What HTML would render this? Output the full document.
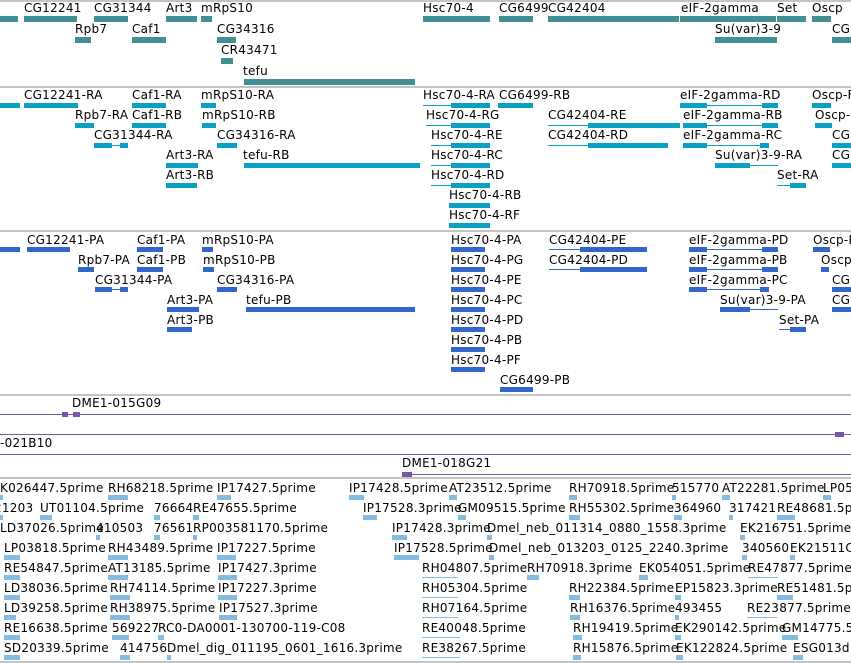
<!DOCTYPE html>
<html><head><meta charset="utf-8"><style>
*{margin:0;padding:0}
body{width:851px;height:663px;background:#fff;position:relative;overflow:hidden;font-family:"DejaVu Sans","Liberation Sans",sans-serif;font-size:12px;color:#000}
div{position:absolute}
.t{white-space:nowrap;line-height:14px;letter-spacing:0.25px}
.hl{left:0;width:851px;height:2px;background:#c4c4c4}
.g{background:#428f94;height:6px}
.x{background:#0aa0c3;height:5px}
.xl{background:#0aa0c3;height:1px}
.p{background:#3366cc;height:5px}
.pl{background:#3366cc;height:1px}
.e{background:#86bbe0;height:5px}
.u{background:#7755aa;height:1px}
.ua{background:#7755aa;height:5px}
</style></head><body>
<div class="hl" style="top:0"></div>
<!-- gene track -->
<div class="t" style="left:24px;top:1px">CG12241</div><div class="t" style="left:94px;top:1px">CG31344</div><div class="t" style="left:166px;top:1px">Art3</div><div class="t" style="left:201px;top:1px">mRpS10</div><div class="t" style="left:423px;top:1px">Hsc70-4</div><div class="t" style="left:499px;top:1px">CG6499</div><div class="t" style="left:548px;top:1px">CG42404</div><div class="t" style="left:681px;top:1px">eIF-2gamma</div><div class="t" style="left:777px;top:1px">Set</div><div class="t" style="left:812px;top:1px">Oscp</div>
<div class="g" style="left:0;top:16px;width:18px"></div><div class="g" style="left:24px;top:16px;width:53px"></div><div class="g" style="left:94px;top:16px;width:34px"></div><div class="g" style="left:166px;top:16px;width:31px"></div><div class="g" style="left:201px;top:16px;width:11px"></div><div class="g" style="left:423px;top:16px;width:67px"></div><div class="g" style="left:499px;top:16px;width:34px"></div><div class="g" style="left:548px;top:16px;width:131px"></div><div class="g" style="left:680px;top:16px;width:96px"></div><div class="g" style="left:777px;top:16px;width:29px"></div><div class="g" style="left:812px;top:16px;width:19px"></div>
<div class="t" style="left:75px;top:22px">Rpb7</div><div class="t" style="left:132px;top:22px">Caf1</div><div class="t" style="left:217px;top:22px">CG34316</div><div class="t" style="left:715px;top:22px">Su(var)3-9</div><div class="t" style="left:832px;top:22px">CG2</div>
<div class="g" style="left:75px;top:37px;width:16px"></div><div class="g" style="left:132px;top:37px;width:34px"></div><div class="g" style="left:217px;top:37px;width:19px"></div><div class="g" style="left:715px;top:37px;width:62px"></div><div class="g" style="left:832px;top:37px;width:19px"></div>
<div class="t" style="left:221px;top:43px">CR43471</div><div class="g" style="left:221px;top:58px;width:12px"></div>
<div class="t" style="left:243px;top:64px">tefu</div><div class="g" style="left:244px;top:79px;width:171px"></div>
<div class="hl" style="top:86px"></div>
<!-- transcripts -->
<div class="t" style="left:24px;top:88px">CG12241-RA</div><div class="t" style="left:132px;top:88px">Caf1-RA</div><div class="t" style="left:201px;top:88px">mRpS10-RA</div><div class="t" style="left:423px;top:88px">Hsc70-4-RA</div><div class="t" style="left:499px;top:88px">CG6499-RB</div><div class="t" style="left:680px;top:88px">eIF-2gamma-RD</div><div class="t" style="left:812px;top:88px">Oscp-F</div>
<div class="x" style="left:0;top:103px;width:20px"></div><div class="x" style="left:24px;top:103px;width:54px"></div><div class="x" style="left:132px;top:103px;width:34px"></div><div class="x" style="left:201px;top:103px;width:15px"></div><div class="xl" style="left:423px;top:105px;width:67px"></div><div class="x" style="left:451px;top:103px;width:39px"></div><div class="x" style="left:498px;top:103px;width:35px"></div><div class="x" style="left:680px;top:103px;width:27px"></div><div class="xl" style="left:680px;top:105px;width:98px"></div><div class="x" style="left:762px;top:103px;width:16px"></div><div class="x" style="left:812px;top:103px;width:19px"></div>
<div class="t" style="left:75px;top:108px">Rpb7-RA</div><div class="t" style="left:132px;top:108px">Caf1-RB</div><div class="t" style="left:202px;top:108px">mRpS10-RB</div><div class="t" style="left:426px;top:108px">Hsc70-4-RG</div><div class="t" style="left:548px;top:108px">CG42404-RE</div><div class="t" style="left:683px;top:108px">eIF-2gamma-RB</div><div class="t" style="left:815px;top:108px">Oscp-</div>
<div class="x" style="left:75px;top:123px;width:19px"></div><div class="x" style="left:132px;top:123px;width:34px"></div><div class="x" style="left:202px;top:123px;width:14px"></div><div class="xl" style="left:426px;top:125px;width:64px"></div><div class="x" style="left:451px;top:123px;width:39px"></div><div class="xl" style="left:548px;top:125px;width:132px"></div><div class="x" style="left:588px;top:123px;width:92px"></div><div class="x" style="left:683px;top:123px;width:24px"></div><div class="xl" style="left:683px;top:125px;width:95px"></div><div class="x" style="left:762px;top:123px;width:16px"></div><div class="x" style="left:815px;top:123px;width:17px"></div>
<div class="t" style="left:94px;top:128px">CG31344-RA</div><div class="t" style="left:217px;top:128px">CG34316-RA</div><div class="t" style="left:431px;top:128px">Hsc70-4-RE</div><div class="t" style="left:548px;top:128px">CG42404-RD</div><div class="t" style="left:683px;top:128px">eIF-2gamma-RC</div><div class="t" style="left:832px;top:128px">CG2</div>
<div class="x" style="left:94px;top:143px;width:18px"></div><div class="xl" style="left:94px;top:145px;width:34px"></div><div class="x" style="left:120px;top:143px;width:8px"></div><div class="x" style="left:217px;top:143px;width:20px"></div><div class="xl" style="left:431px;top:145px;width:59px"></div><div class="x" style="left:451px;top:143px;width:39px"></div><div class="xl" style="left:548px;top:145px;width:120px"></div><div class="x" style="left:588px;top:143px;width:80px"></div><div class="x" style="left:683px;top:143px;width:24px"></div><div class="xl" style="left:683px;top:145px;width:86px"></div><div class="x" style="left:760px;top:143px;width:9px"></div><div class="x" style="left:832px;top:143px;width:19px"></div>
<div class="t" style="left:166px;top:148px">Art3-RA</div><div class="t" style="left:243px;top:148px">tefu-RB</div><div class="t" style="left:431px;top:148px">Hsc70-4-RC</div><div class="t" style="left:715px;top:148px">Su(var)3-9-RA</div><div class="t" style="left:832px;top:148px">CG2</div>
<div class="x" style="left:166px;top:163px;width:32px"></div><div class="x" style="left:244px;top:163px;width:176px"></div><div class="xl" style="left:431px;top:165px;width:59px"></div><div class="x" style="left:451px;top:163px;width:39px"></div><div class="x" style="left:715px;top:163px;width:35px"></div><div class="xl" style="left:715px;top:165px;width:63px"></div><div class="x" style="left:832px;top:163px;width:19px"></div>
<div class="t" style="left:166px;top:168px">Art3-RB</div><div class="t" style="left:431px;top:168px">Hsc70-4-RD</div><div class="t" style="left:777px;top:168px">Set-RA</div>
<div class="x" style="left:166px;top:183px;width:31px"></div><div class="xl" style="left:431px;top:185px;width:59px"></div><div class="x" style="left:451px;top:183px;width:39px"></div><div class="xl" style="left:777px;top:185px;width:29px"></div><div class="x" style="left:790px;top:183px;width:16px"></div>
<div class="t" style="left:449px;top:188px">Hsc70-4-RB</div><div class="x" style="left:449px;top:203px;width:41px"></div>
<div class="t" style="left:449px;top:208px">Hsc70-4-RF</div><div class="x" style="left:449px;top:223px;width:41px"></div>
<div class="hl" style="top:230px"></div>
<!-- proteins -->
<div class="t" style="left:27px;top:233px">CG12241-PA</div><div class="t" style="left:137px;top:233px">Caf1-PA</div><div class="t" style="left:202px;top:233px">mRpS10-PA</div><div class="t" style="left:451px;top:233px">Hsc70-4-PA</div><div class="t" style="left:549px;top:233px">CG42404-PE</div><div class="t" style="left:689px;top:233px">eIF-2gamma-PD</div><div class="t" style="left:813px;top:233px">Oscp-P</div>
<div class="p" style="left:0;top:247px;width:20px"></div><div class="p" style="left:27px;top:247px;width:43px"></div><div class="p" style="left:137px;top:247px;width:26px"></div><div class="p" style="left:202px;top:247px;width:11px"></div><div class="p" style="left:451px;top:247px;width:34px"></div><div class="pl" style="left:549px;top:249px;width:98px"></div><div class="p" style="left:580px;top:247px;width:67px"></div><div class="p" style="left:689px;top:247px;width:18px"></div><div class="pl" style="left:689px;top:249px;width:89px"></div><div class="p" style="left:762px;top:247px;width:16px"></div><div class="p" style="left:813px;top:247px;width:17px"></div>
<div class="t" style="left:78px;top:253px">Rpb7-PA</div><div class="t" style="left:137px;top:253px">Caf1-PB</div><div class="t" style="left:203px;top:253px">mRpS10-PB</div><div class="t" style="left:451px;top:253px">Hsc70-4-PG</div><div class="t" style="left:549px;top:253px">CG42404-PD</div><div class="t" style="left:689px;top:253px">eIF-2gamma-PB</div><div class="t" style="left:821px;top:253px">Oscp</div>
<div class="p" style="left:78px;top:267px;width:16px"></div><div class="p" style="left:137px;top:267px;width:26px"></div><div class="p" style="left:203px;top:267px;width:11px"></div><div class="p" style="left:451px;top:267px;width:34px"></div><div class="pl" style="left:549px;top:269px;width:98px"></div><div class="p" style="left:580px;top:267px;width:67px"></div><div class="p" style="left:689px;top:267px;width:18px"></div><div class="pl" style="left:689px;top:269px;width:89px"></div><div class="p" style="left:762px;top:267px;width:16px"></div><div class="p" style="left:821px;top:267px;width:8px"></div>
<div class="t" style="left:95px;top:273px">CG31344-PA</div><div class="t" style="left:217px;top:273px">CG34316-PA</div><div class="t" style="left:451px;top:273px">Hsc70-4-PE</div><div class="t" style="left:689px;top:273px">eIF-2gamma-PC</div><div class="t" style="left:832px;top:273px">CG2</div>
<div class="p" style="left:95px;top:287px;width:17px"></div><div class="pl" style="left:95px;top:289px;width:33px"></div><div class="p" style="left:120px;top:287px;width:8px"></div><div class="p" style="left:217px;top:287px;width:20px"></div><div class="p" style="left:451px;top:287px;width:34px"></div><div class="p" style="left:689px;top:287px;width:18px"></div><div class="pl" style="left:689px;top:289px;width:80px"></div><div class="p" style="left:760px;top:287px;width:9px"></div><div class="p" style="left:832px;top:287px;width:19px"></div>
<div class="t" style="left:167px;top:293px">Art3-PA</div><div class="t" style="left:246px;top:293px">tefu-PB</div><div class="t" style="left:451px;top:293px">Hsc70-4-PC</div><div class="t" style="left:720px;top:293px">Su(var)3-9-PA</div><div class="t" style="left:832px;top:293px">CG2</div>
<div class="p" style="left:167px;top:307px;width:32px"></div><div class="p" style="left:246px;top:307px;width:169px"></div><div class="p" style="left:451px;top:307px;width:34px"></div><div class="p" style="left:720px;top:307px;width:30px"></div><div class="pl" style="left:720px;top:309px;width:58px"></div><div class="p" style="left:832px;top:307px;width:19px"></div>
<div class="t" style="left:167px;top:313px">Art3-PB</div><div class="t" style="left:451px;top:313px">Hsc70-4-PD</div><div class="t" style="left:779px;top:313px">Set-PA</div>
<div class="p" style="left:167px;top:327px;width:25px"></div><div class="p" style="left:451px;top:327px;width:34px"></div><div class="pl" style="left:779px;top:329px;width:27px"></div><div class="p" style="left:790px;top:327px;width:16px"></div>
<div class="t" style="left:451px;top:333px">Hsc70-4-PB</div><div class="p" style="left:451px;top:347px;width:34px"></div>
<div class="t" style="left:451px;top:353px">Hsc70-4-PF</div><div class="p" style="left:451px;top:367px;width:34px"></div>
<div class="t" style="left:500px;top:373px">CG6499-PB</div><div class="p" style="left:500px;top:387px;width:33px"></div>
<div class="hl" style="top:394px"></div>
<!-- clones -->
<div class="t" style="left:72px;top:396px">DME1-015G09</div>
<div class="u" style="left:0;top:414px;width:851px"></div><div class="ua" style="left:62px;top:412px;width:6px"></div><div class="ua" style="left:73px;top:412px;width:7px"></div>
<div class="u" style="left:0;top:434px;width:851px"></div><div class="ua" style="left:835px;top:432px;width:9px"></div>
<div class="t" style="left:0;top:436px">-021B10</div>
<div class="u" style="left:0;top:454px;width:851px"></div>
<div class="t" style="left:402px;top:456px">DME1-018G21</div>
<div class="u" style="left:402px;top:474px;width:449px"></div><div class="ua" style="left:402px;top:472px;width:10px"></div>
<div class="hl" style="top:477px"></div>
<!-- ESTs -->
<div class="t" style="left:0;top:481px">K026447.5prime</div><div class="t" style="left:108px;top:481px">RH68218.5prime</div><div class="t" style="left:217px;top:481px">IP17427.5prime</div><div class="t" style="left:349px;top:481px">IP17428.5prime</div><div class="t" style="left:449px;top:481px">AT23512.5prime</div><div class="t" style="left:569px;top:481px">RH70918.5prime</div><div class="t" style="left:672px;top:481px">515770</div><div class="t" style="left:722px;top:481px">AT22281.5prime</div><div class="t" style="left:823px;top:481px">LP05</div>
<div class="e" style="left:0;top:495px;width:3px"></div><div class="e" style="left:108px;top:495px;width:20px"></div><div class="e" style="left:217px;top:495px;width:14px"></div><div class="e" style="left:349px;top:495px;width:15px"></div><div class="e" style="left:449px;top:495px;width:8px"></div><div class="e" style="left:569px;top:495px;width:8px"></div><div class="e" style="left:672px;top:495px;width:4px"></div><div class="e" style="left:722px;top:495px;width:8px"></div><div class="e" style="left:823px;top:495px;width:8px"></div>
<div class="t" style="left:-6px;top:501px">21203</div><div class="t" style="left:40px;top:501px">UT01104.5prime</div><div class="t" style="left:154px;top:501px">76664</div><div class="t" style="left:193px;top:501px">RE47655.5prime</div><div class="t" style="left:363px;top:501px">IP17528.3prime</div><div class="t" style="left:458px;top:501px">GM09515.5prime</div><div class="t" style="left:569px;top:501px">RH55302.5prime</div><div class="t" style="left:674px;top:501px">364960</div><div class="t" style="left:729px;top:501px">317421</div><div class="t" style="left:777px;top:501px">RE48681.5p</div>
<div class="e" style="left:0;top:515px;width:3px"></div><div class="e" style="left:40px;top:515px;width:12px"></div><div class="e" style="left:154px;top:515px;width:6px"></div><div class="e" style="left:193px;top:515px;width:6px"></div><div class="e" style="left:363px;top:515px;width:14px"></div><div class="e" style="left:458px;top:515px;width:8px"></div><div class="e" style="left:569px;top:515px;width:11px"></div><div class="e" style="left:674px;top:515px;width:8px"></div><div class="e" style="left:729px;top:515px;width:4px"></div><div class="e" style="left:777px;top:515px;width:18px"></div>
<div class="t" style="left:0;top:521px">LD37026.5prime</div><div class="t" style="left:96px;top:521px">410503</div><div class="t" style="left:154px;top:521px">76561</div><div class="t" style="left:193px;top:521px">RP003581170.5prime</div><div class="t" style="left:392px;top:521px">IP17428.3prime</div><div class="t" style="left:487px;top:521px">Dmel_neb_011314_0880_1558.3prime</div><div class="t" style="left:740px;top:521px">EK216751.5prime</div>
<div class="e" style="left:96px;top:535px;width:4px"></div><div class="e" style="left:154px;top:535px;width:6px"></div><div class="e" style="left:193px;top:535px;width:4px"></div><div class="e" style="left:392px;top:535px;width:15px"></div><div class="e" style="left:487px;top:535px;width:5px"></div><div class="e" style="left:740px;top:535px;width:5px"></div>
<div class="t" style="left:4px;top:541px">LP03818.5prime</div><div class="t" style="left:108px;top:541px">RH43489.5prime</div><div class="t" style="left:217px;top:541px">IP17227.5prime</div><div class="t" style="left:394px;top:541px">IP17528.5prime</div><div class="t" style="left:489px;top:541px">Dmel_neb_013203_0125_2240.3prime</div><div class="t" style="left:742px;top:541px">340560</div><div class="t" style="left:790px;top:541px">EK21511C</div>
<div class="e" style="left:4px;top:555px;width:16px"></div><div class="e" style="left:108px;top:555px;width:20px"></div><div class="e" style="left:217px;top:555px;width:19px"></div><div class="e" style="left:394px;top:555px;width:25px"></div><div class="e" style="left:489px;top:555px;width:5px"></div><div class="e" style="left:742px;top:555px;width:5px"></div><div class="e" style="left:790px;top:555px;width:5px"></div>
<div class="t" style="left:4px;top:561px">RE54847.5prime</div><div class="t" style="left:108px;top:561px">AT13185.5prime</div><div class="t" style="left:218px;top:561px">IP17427.3prime</div><div class="t" style="left:422px;top:561px">RH04807.5prime</div><div class="t" style="left:527px;top:561px">RH70918.3prime</div><div class="t" style="left:639px;top:561px">EK054051.5prime</div><div class="t" style="left:748px;top:561px">RE47877.5prime</div>
<div class="e" style="left:4px;top:575px;width:16px"></div><div class="e" style="left:108px;top:575px;width:20px"></div><div class="e" style="left:218px;top:575px;width:19px"></div><div class="e" style="left:422px;top:577px;width:36px;height:1px"></div><div class="e" style="left:527px;top:575px;width:12px"></div><div class="e" style="left:639px;top:575px;width:9px"></div><div class="e" style="left:748px;top:577px;width:30px;height:1px"></div>
<div class="t" style="left:4px;top:581px">LD38036.5prime</div><div class="t" style="left:110px;top:581px">RH74114.5prime</div><div class="t" style="left:218px;top:581px">IP17227.3prime</div><div class="t" style="left:422px;top:581px">RH05304.5prime</div><div class="t" style="left:569px;top:581px">RH22384.5prime</div><div class="t" style="left:675px;top:581px">EP15823.3prime</div><div class="t" style="left:777px;top:581px">RE51481.5p</div>
<div class="e" style="left:4px;top:595px;width:16px"></div><div class="e" style="left:110px;top:595px;width:20px"></div><div class="e" style="left:218px;top:595px;width:19px"></div><div class="e" style="left:422px;top:597px;width:36px;height:1px"></div><div class="e" style="left:569px;top:595px;width:11px"></div><div class="e" style="left:675px;top:595px;width:6px"></div><div class="e" style="left:777px;top:595px;width:16px"></div>
<div class="t" style="left:4px;top:601px">LD39258.5prime</div><div class="t" style="left:110px;top:601px">RH38975.5prime</div><div class="t" style="left:219px;top:601px">IP17527.3prime</div><div class="t" style="left:422px;top:601px">RH07164.5prime</div><div class="t" style="left:570px;top:601px">RH16376.5prime</div><div class="t" style="left:675px;top:601px">493455</div><div class="t" style="left:747px;top:601px">RE23877.5prime</div>
<div class="e" style="left:4px;top:615px;width:12px"></div><div class="e" style="left:110px;top:615px;width:20px"></div><div class="e" style="left:219px;top:615px;width:18px"></div><div class="e" style="left:422px;top:617px;width:36px;height:1px"></div><div class="e" style="left:570px;top:615px;width:10px"></div><div class="e" style="left:675px;top:615px;width:4px"></div><div class="e" style="left:747px;top:617px;width:30px;height:1px"></div>
<div class="t" style="left:4px;top:621px">RE16638.5prime</div><div class="t" style="left:112px;top:621px">569227</div><div class="t" style="left:158px;top:621px">RC0-DA0001-130700-119-C08</div><div class="t" style="left:422px;top:621px">RE40048.5prime</div><div class="t" style="left:573px;top:621px">RH19419.5prime</div><div class="t" style="left:675px;top:621px">EK290142.5prime</div><div class="t" style="left:782px;top:621px">GM14775.5</div>
<div class="e" style="left:4px;top:635px;width:16px"></div><div class="e" style="left:112px;top:635px;width:17px"></div><div class="e" style="left:158px;top:635px;width:6px"></div><div class="e" style="left:422px;top:637px;width:38px;height:1px"></div><div class="e" style="left:573px;top:635px;width:9px"></div><div class="e" style="left:675px;top:635px;width:6px"></div><div class="e" style="left:782px;top:635px;width:16px"></div>
<div class="t" style="left:4px;top:641px">SD20339.5prime</div><div class="t" style="left:120px;top:641px">414756</div><div class="t" style="left:167px;top:641px">Dmel_dig_011195_0601_1616.3prime</div><div class="t" style="left:422px;top:641px">RE38267.5prime</div><div class="t" style="left:573px;top:641px">RH15876.5prime</div><div class="t" style="left:676px;top:641px">EK122824.5prime</div><div class="t" style="left:793px;top:641px">ESG013d.</div>
<div class="e" style="left:4px;top:655px;width:16px"></div><div class="e" style="left:120px;top:655px;width:10px"></div><div class="e" style="left:167px;top:655px;width:4px"></div><div class="e" style="left:422px;top:657px;width:38px;height:1px"></div><div class="e" style="left:573px;top:655px;width:8px"></div><div class="e" style="left:676px;top:655px;width:7px"></div><div class="e" style="left:793px;top:655px;width:10px"></div>
<div class="hl" style="top:661px"></div>
</body></html>
